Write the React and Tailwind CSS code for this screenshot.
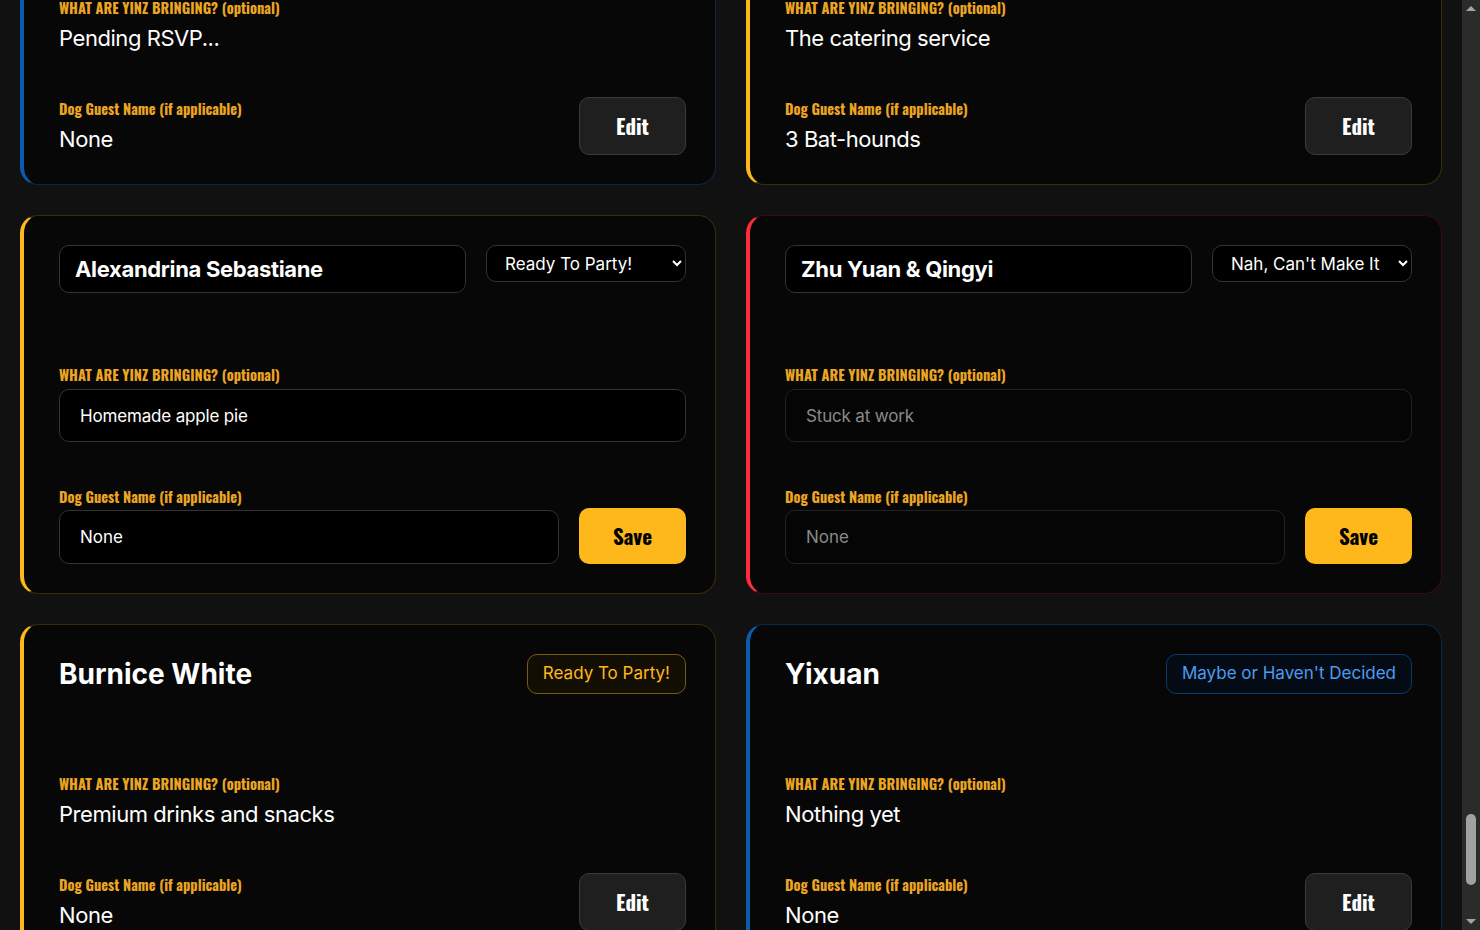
import { useState, useLayoutEffect, useRef } from "react";

const STATUS = {
  yes: {
    text: "Ready To Party!",
    card: "border-[#3a2c0a] border-l-[#ffb81c]",
    badge: "border-[#7a5a10] bg-[#130e03] text-[#ffb81c]",
  },
  maybe: {
    text: "Maybe or Haven't Decided",
    card: "border-[#0b2747] border-l-[#0b5cb0]",
    badge: "border-[#0c3a6b] bg-[#050b14] text-[#4d9cf0]",
  },
  no: {
    text: "Nah, Can't Make It",
    card: "border-[#3a0b10] border-l-[#ff2d3b]",
    badge: "border-[#6b1219] bg-[#140405] text-[#ff5a63]",
  },
};

const labelCls =
  "font-['Oswald','Liberation_Sans_Narrow','DejaVu_Sans_Condensed',sans-serif] text-[14.5px] font-bold leading-5 text-[#eca522]";
const btnFont = "font-['Oswald','Liberation_Sans_Narrow','DejaVu_Sans_Condensed',sans-serif]";

const fillerNames = [
  "Marisol Duquesne", "Terrence Kowalski", "Dana Polanski", "Frankie Rooney",
  "Gloria Stankowski", "Hank Mazeroski", "Irene Zelinski", "Jerome Bettis Jr.",
  "Katie O'Hara", "Lou Primanti", "Maggie Heinz", "Nate Ruscitti",
  "Olivia Sciulli", "Pete Wojcik", "Quinn Murtha", "Rosie Bialek",
  "Sal DeLuca", "Tina Kraus", "Ursula Vance", "Vinnie Grabowski",
  "Wendy Nardozzi", "Xavier Lipinski", "Yolanda Pappas", "Zack Haberman",
  "Bernadette Kline", "Carmen Szabo", "Dominic Rizzo", "Eileen Brandt",
  "Felix Novak", "Gina Palumbo", "Howard Tomczak", "Isabel Reyes",
  "Jimmy Dolan", "Karen Yablonski", "Leo Marchetti", "Monica Sweeney",
  "Nick Papadakis", "Opal Hendricks", "Paulie Gentile", "Renee Costa",
  "Stan Wozniak", "Theresa Flynn", "Victor Hlavac", "Wanda Pirozzi",
  "Alberto Sanchez", "Beth Kaminski", "Chuck Yanko", "Denise Moretti",
  "Eddie Kovach", "Fran Szymanski", "Grace Liu", "Hector Alvarez",
  "Joanie Kubiak", "Mikey Santucci",
];
const items = ["Pierogies", "Chipped ham sandwiches", "Cookie table trays", "A case of Iron City", "Pepperoni rolls", "Haluski", "Nothing yet", "Pending RSVP..."];
const dogs = ["None", "Biscuit", "None", "Yinzer"];
const statuses = ["yes", "maybe", "yes", "no"];

const initialGuests = [
  ...fillerNames.map((name, i) => ({
    id: i + 1,
    name,
    status: statuses[i % statuses.length],
    bringing: items[i % items.length],
    dog: dogs[i % dogs.length],
  })),
  { id: 101, name: "Rebecca Stiles", status: "maybe", bringing: "Pending RSVP...", dog: "None" },
  { id: 102, name: "Bruce & Alfred", status: "yes", bringing: "The catering service", dog: "3 Bat-hounds" },
  { id: 103, name: "Alexandrina Sebastiane", status: "yes", bringing: "Homemade apple pie", dog: "None" },
  { id: 104, name: "Zhu Yuan & Qingyi", status: "no", bringing: "Stuck at work", dog: "None" },
  { id: 105, name: "Burnice White", status: "yes", bringing: "Premium drinks and snacks", dog: "None" },
  { id: 106, name: "Yixuan", status: "maybe", bringing: "Nothing yet", dog: "None" },
];

function GuestView({ guest, onEdit }) {
  const s = STATUS[guest.status];
  return (
    <>
      <div className="h-[120px]">
        <div className="flex h-10 items-center justify-between">
          <h3 className="text-[28px] font-bold leading-none text-white">{guest.name}</h3>
          <span className={`flex h-10 items-center rounded-[10px] border px-[15px] text-[17px] ${s.badge}`}>
            {s.text}
          </span>
        </div>
      </div>
      <p className={labelCls}>WHAT ARE YINZ BRINGING? (optional)</p>
      <p className="mt-1.5 text-[22px] leading-7 tracking-[-0.02em] text-white">{guest.bringing}</p>
      <div className="mt-[45px] flex items-end justify-between">
        <div className="pb-0.5">
          <p className={labelCls}>Dog Guest Name (if applicable)</p>
          <p className="mt-1.5 text-[22px] leading-7 tracking-[-0.02em] text-white">{guest.dog}</p>
        </div>
        <button
          onClick={onEdit}
          className={`h-[58px] w-[107px] rounded-[10px] border border-[#3a3a3a] bg-[#1f1f1f] text-[21px] font-bold text-white ${btnFont}`}
        >
          Edit
        </button>
      </div>
    </>
  );
}

function GuestForm({ guest, onChange, onSave }) {
  const off = guest.status === "no";
  const field = off
    ? "border-[#222] bg-[#050505] text-[#8a8a8a]"
    : "border-[#333] bg-black text-white";
  return (
    <>
      <div className="flex h-[120px] items-start gap-5">
        <input
          value={guest.name}
          onChange={(e) => onChange({ name: e.target.value })}
          className="h-12 min-w-0 flex-1 rounded-[10px] border border-[#333] bg-black px-[15px] text-[22px] font-bold tracking-[-0.015em] text-white outline-none"
        />
        <select
          value={guest.status}
          onChange={(e) => onChange({ status: e.target.value })}
          className="h-[37px] w-[200px] rounded-[10px] border border-[#333] bg-black pl-[14px] pr-3 text-[17px] text-white outline-none"
        >
          <option value="yes">Ready To Party!</option>
          <option value="maybe">Maybe or Haven't Decided</option>
          <option value="no">Nah, Can't Make It</option>
        </select>
      </div>
      <p className={labelCls}>WHAT ARE YINZ BRINGING? (optional)</p>
      <input
        value={guest.bringing}
        disabled={off}
        onChange={(e) => onChange({ bringing: e.target.value })}
        className={`mt-1 h-[53px] w-full rounded-[10px] border px-5 text-[17px] tracking-[-0.01em] outline-none ${field}`}
      />
      <div className="mt-[45px] flex items-end gap-5">
        <div className="min-w-0 flex-1">
          <p className={labelCls}>Dog Guest Name (if applicable)</p>
          <input
            value={guest.dog}
            disabled={off}
            onChange={(e) => onChange({ dog: e.target.value })}
            className={`mt-[3px] h-[54px] w-full rounded-[10px] border px-5 text-[17px] outline-none ${field}`}
          />
        </div>
        <button
          onClick={onSave}
          className={`h-14 w-[107px] rounded-[10px] bg-[#ffb81c] text-[21px] font-bold text-black ${btnFont}`}
        >
          Save
        </button>
      </div>
    </>
  );
}

// slim rail that mirrors the list's scroll position
function ScrollRail({ thumb }) {
  return (
    <div className="flex w-[18px] shrink-0 flex-col bg-[#2b2b2b]">
      <div className="flex h-[17px] items-center justify-center">
        <span className="h-0 w-0 border-x-[5px] border-b-[5px] border-x-transparent border-b-[#a3a3a3]" />
      </div>
      <div className="relative flex-1">
        <div
          className="absolute left-1 right-1 rounded-full bg-[#a1a1a1]"
          style={{ top: thumb.top, height: thumb.height }}
        />
      </div>
      <div className="flex h-[17px] items-center justify-center">
        <span className="h-0 w-0 border-x-[5px] border-t-[5px] border-x-transparent border-t-[#a3a3a3]" />
      </div>
    </div>
  );
}

export default function App() {
  const [guests, setGuests] = useState(initialGuests);
  const [editing, setEditing] = useState([103, 104]);
  const [thumb, setThumb] = useState({ top: 0, height: 0 });
  const scroller = useRef(null);
  const firstEdit = useRef(null);

  const syncThumb = () => {
    const box = scroller.current;
    if (!box) return;
    const track = box.clientHeight - 34;
    setThumb({
      top: (track * box.scrollTop) / box.scrollHeight,
      height: Math.max(20, (track * box.clientHeight) / box.scrollHeight),
    });
  };

  // bring the first card that is open for editing into view
  useLayoutEffect(() => {
    const box = scroller.current;
    const card = firstEdit.current;
    if (box && card) {
      box.scrollTop =
        card.getBoundingClientRect().top - box.getBoundingClientRect().top + box.scrollTop - 215;
    }
    syncThumb();
  }, []);

  const update = (id, patch) =>
    setGuests(guests.map((g) => (g.id === id ? { ...g, ...patch } : g)));

  const going = guests.filter((g) => g.status === "yes").length;

  return (
    <div className="flex h-screen bg-[#111111] font-['Inter','Liberation_Sans',sans-serif] text-white scheme-dark">
      <div ref={scroller} onScroll={syncThumb} className="min-w-0 flex-1 overflow-y-scroll [scrollbar-width:none]">
        <div className="px-5 pt-5 pb-5">
          {/* page heading */}
          <header className="flex h-[329px] flex-col items-center justify-center gap-4 text-center">
            <h1 className={`text-6xl font-bold uppercase text-[#ffb81c] ${btnFont}`}>Yinz Guest List</h1>
            <p className="text-lg text-[#aaa]">
              {guests.length} guests invited · {going} ready to party
            </p>
          </header>

          <div className="mt-[30px] grid grid-cols-2 items-start gap-[30px]">
            {guests.map((g) => {
              const isEditing = editing.includes(g.id);
              const isFirst = isEditing && editing[0] === g.id;
              return (
                <div
                  key={g.id}
                  ref={isFirst ? firstEdit : null}
                  className={`rounded-[18px] border border-l-4 bg-[#070707] pt-[29px] pr-[29px] pb-[29px] pl-[35px] ${STATUS[g.status].card}`}
                >
                  {isEditing ? (
                    <GuestForm
                      guest={g}
                      onChange={(patch) => update(g.id, patch)}
                      onSave={() => setEditing(editing.filter((id) => id !== g.id))}
                    />
                  ) : (
                    <GuestView guest={g} onEdit={() => setEditing([...editing, g.id])} />
                  )}
                </div>
              );
            })}
          </div>

          <footer className="mt-16 border-t border-[#1c1c1c] py-[115px] text-center text-sm text-[#666]">
            See yinz at the party, n'at.
          </footer>
        </div>
      </div>
      <ScrollRail thumb={thumb} />
    </div>
  );
}
